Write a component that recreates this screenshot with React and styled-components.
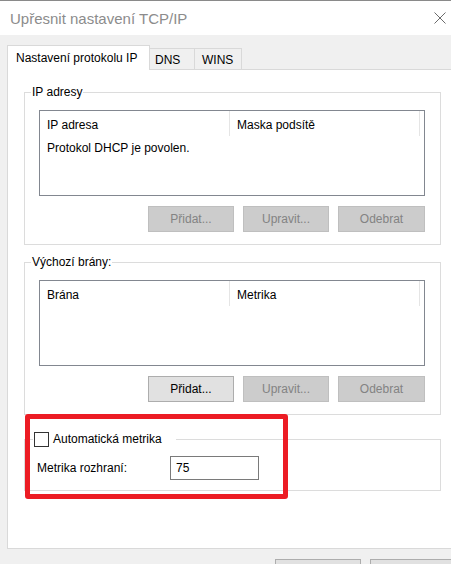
import React from "react"
import styled, { createGlobalStyle } from 'styled-components';

const Global = createGlobalStyle`
    html, body{
        margin: 0;
        padding: 0;
        overflow: hidden;
        background: #f0f0f0;
    }
    body{
        font-family: "Liberation Sans", Arial, sans-serif;
        font-size: 12px;
        color: #000;
    }
`;

const App = () => (
    <Window>
        <Global/>
        <TitleBar>
            <Title>Upřesnit nastavení TCP/IP</Title>
            <CloseIcon width="12" height="12" viewBox="0 0 12 12">
                <path d="M0.5 0.5 L11.5 11.5 M11.5 0.5 L0.5 11.5" stroke="#6b6b6b" strokeWidth="1" fill="none"/>
            </CloseIcon>
        </TitleBar>
        <Body>
            <TabRow>
                <Tab $active>Nastavení protokolu IP</Tab>
                <Tab>DNS</Tab>
                <Tab>WINS</Tab>
            </TabRow>
            <TabPanel>
                <Group $pt={11}>
                    <Legend>IP adresy</Legend>
                    <ListBox>
                        <ListHead>
                            <Col>IP adresa</Col>
                            <Col>Maska podsítě</Col>
                        </ListHead>
                        <ListRow>Protokol DHCP je povolen.</ListRow>
                    </ListBox>
                    <ButtonRow>
                        <Button disabled>Přidat...</Button>
                        <Button disabled>Upravit...</Button>
                        <Button disabled $wide>Odebrat</Button>
                    </ButtonRow>
                </Group>
                <Group $pt={11} $mt={10}>
                    <Legend>Výchozí brány:</Legend>
                    <ListBox>
                        <ListHead>
                            <Col>Brána</Col>
                            <Col>Metrika</Col>
                        </ListHead>
                    </ListBox>
                    <ButtonRow>
                        <Button>Přidat...</Button>
                        <Button disabled>Upravit...</Button>
                        <Button disabled $wide>Odebrat</Button>
                    </ButtonRow>
                </Group>
                <Marked>
                    <Group $pt={9} $mt={0} $pb={10}>
                        <CheckLegend>
                            <CheckBox/>
                            Automatická metrika
                        </CheckLegend>
                        <MetricRow>
                            <span>Metrika rozhraní:</span>
                            <Input>75</Input>
                        </MetricRow>
                    </Group>
                    <RedFrame/>
                </Marked>
            </TabPanel>
            <Footer>
                <Button $footer aria-label="OK"/>
                <Button $footer aria-label="Storno"/>
            </Footer>
        </Body>
    </Window>
)

const Window = styled.div`
    width: 470px;
    height: 564px;
    display: flex;
    flex-direction: column;
`;
const TitleBar = styled.div`
    height: 35px;
    background: #fff;
    border-top: 1px solid #8a8a8a;
    display: flex;
    align-items: center;
    justify-content: space-between;
    padding: 0 24px 0 10px;
    box-sizing: border-box;
    flex-shrink: 0;
`;
const Title = styled.div`
    font-size: 15px;
    color: #8c8c8c;
    margin-top: 1px;
`;
const CloseIcon = styled.svg`
    display: block;
`;
const Body = styled.div`
    padding: 10px 0 0 7px;
    flex: 1;
`;
const TabRow = styled.div`
    display: flex;
    align-items: flex-end;
    height: 25px;
    position: relative;
    z-index: 1;
    margin-bottom: -1px;
`;
const Tab = styled.div`
    box-sizing: border-box;
    height: ${p => p.$active ? 25 : 22}px;
    padding: ${p => p.$active ? 0 : 1}px ${p => p.$active ? 8 : 6}px 0 ${p => p.$active ? 8 : 5}px;
    min-width: 46px;
    display: flex;
    align-items: center;
    background: ${p => p.$active ? '#fff' : '#f0f0f0'};
    border: 1px solid #d9d9d9;
    border-bottom: ${p => p.$active ? 'none' : '1px solid #d9d9d9'};
    & + &{
        margin-left: -1px;
    }
    &:first-child{
        width: 143px;
    }
    &:last-child{
        width: 48px;
        padding-left: 7px;
    }
`;
const TabPanel = styled.div`
    width: 449px;
    height: 480px;
    box-sizing: border-box;
    background: #fff;
    border: 1px solid #d9d9d9;
    padding: 15px 14px 0 16px;
`;
const Group = styled.fieldset`
    margin: ${p => p.$mt || 0}px 0 0;
    border: 1px solid #dcdcdc;
    padding: ${p => p.$pt}px 15px ${p => p.$pb || 12}px 14px;
    min-width: 0;
`;
const Legend = styled.legend`
    padding: 0 1px;
    margin-left: -8px;
    line-height: 14px;
`;
const CheckLegend = styled.legend`
    display: flex;
    align-items: center;
    gap: 4px;
    padding: 0 14px 0 1px;
    margin-left: -6px;
    line-height: 16px;
`;
const CheckBox = styled.span`
    width: 13px;
    height: 13px;
    border: 1px solid #333;
    background: #fff;
    display: inline-block;
`;
const ListBox = styled.div`
    height: 86px;
    box-sizing: border-box;
    border: 1px solid #828790;
    background: #fff;
`;
const ListHead = styled.div`
    display: flex;
    height: 25px;
`;
const Col = styled.div`
    width: 190px;
    box-sizing: border-box;
    padding: 7px 0 0 7px;
    border-right: 1px solid #e5e5e5;
`;
const ListRow = styled.div`
    padding: 5px 7px 0;
`;
const ButtonRow = styled.div`
    display: flex;
    justify-content: flex-end;
    gap: 9px;
    margin-top: 10px;
`;
const Button = styled.button`
    font: inherit;
    width: ${p => p.$wide ? 87 : 86}px;
    height: 26px;
    box-sizing: border-box;
    margin: 0;
    padding: 0;
    background: #e1e1e1;
    border: 1px solid #adadad;
    color: #000;
    &:disabled{
        background: #cccccc;
        border-color: #bfbfbf;
        color: #838383;
    }
`;
const Marked = styled.div`
    position: relative;
    margin-top: 16px;
`;
const RedFrame = styled.div`
    position: absolute;
    left: 1px;
    top: -17px;
    width: 263px;
    height: 85px;
    box-sizing: border-box;
    border: 5px solid #ec1c24;
    border-radius: 3px;
    pointer-events: none;
`;
const MetricRow = styled.div`
    display: flex;
    align-items: center;
    margin-left: -2px;
    & span{
        width: 133px;
    }
`;
const Input = styled.div`
    width: 89px;
    height: 24px;
    box-sizing: border-box;
    border: 1px solid #7a7a7a;
    padding: 4px 5px 0;
`;
const Footer = styled.div`
    display: flex;
    gap: 9px;
    padding: 10px 0 0 268px;
`;

export default App
